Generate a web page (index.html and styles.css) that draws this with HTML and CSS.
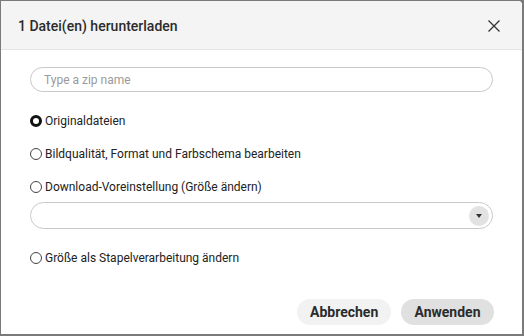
FILE: index.html
```html
<!DOCTYPE html>
<html lang="de">
<head>
    <meta charset="UTF-8">
    <title>Herunterladen</title>
    <link rel="stylesheet" href="styles.css">
</head>
<body>
    <div class="dialog">
        <div class="dialog-header">
            <h1 class="dialog-title">1 Datei(en) herunterladen</h1>
            <button class="close-btn" aria-label="Schließen">
                <svg width="12" height="12" viewBox="0 0 12 12">
                    <path d="M0.5 0.5 L11.5 11.5 M11.5 0.5 L0.5 11.5" stroke="#333" stroke-width="1.3" fill="none"/>
                </svg>
            </button>
        </div>

        <div class="dialog-body">
            <input type="text" class="zip-input" placeholder="Type a zip name">

            <label class="option option-first">
                <span class="radio checked"></span>
                Originaldateien
            </label>
            <label class="option">
                <span class="radio"></span>
                Bildqualität, Format und Farbschema bearbeiten
            </label>
            <label class="option">
                <span class="radio"></span>
                Download-Voreinstellung (Größe ändern)
            </label>
            <div class="select-box">
                <span class="select-arrow">
                    <svg width="6" height="4" viewBox="0 0 6 4"><path d="M0 0 L6 0 L3 4 Z" fill="#333"/></svg>
                </span>
            </div>
            <label class="option option-last">
                <span class="radio"></span>
                Größe als Stapelverarbeitung ändern
            </label>
        </div>

        <div class="dialog-footer">
            <button class="btn btn-cancel">Abbrechen</button>
            <button class="btn btn-apply">Anwenden</button>
        </div>
    </div>
</body>
</html>
```

FILE: styles.css
```css
* {
    margin: 0;
    padding: 0;
    box-sizing: border-box;
}

body {
    font-family: Roboto, 'Liberation Sans', sans-serif;
    background: #7a7a7a;
    width: 524px;
    height: 336px;
    overflow: hidden;
    padding: 1px 2px 2px 1px;
}

.dialog {
    background: #fff;
    width: 521px;
    height: 333px;
    border-radius: 0 4px 0 0;
    display: flex;
    flex-direction: column;
    overflow: hidden;
}

/* Header */
.dialog-header {
    background: #f4f4f4;
    border-bottom: 1px solid #e4e4e4;
    height: 49px;
    display: flex;
    align-items: center;
    justify-content: space-between;
    padding: 0 22px 0 17px;
}

.dialog-title {
    font-size: 14px;
    font-weight: 500;
    color: #2b2b2b;
    margin-top: 1px;
}

.close-btn {
    background: none;
    border: none;
    width: 12px;
    height: 12px;
    display: flex;
    margin-top: 1px;
}

/* Body */
.dialog-body {
    flex: 1;
    display: flex;
    flex-direction: column;
    padding: 17px 29px 0 29px;
}

.zip-input {
    width: 463px;
    height: 25px;
    border: 1px solid #c8c8c8;
    border-radius: 13px;
    padding: 0 13px;
    font-family: inherit;
    font-size: 12px;
    color: #333;
    outline: none;
    background: #fff;
}

.zip-input::placeholder {
    color: #9a9a9a;
}

.option {
    display: flex;
    align-items: center;
    gap: 3px;
    font-size: 12px;
    color: #222;
    height: 16px;
    margin-top: 17px;
}

.option-first {
    margin-top: 21px;
}

.option-last {
    margin-top: 21px;
}

.radio {
    width: 12px;
    height: 12px;
    border: 1px solid #444;
    border-radius: 50%;
    flex-shrink: 0;
    background: #fff;
}

.radio.checked {
    border: 3.5px solid #111;
}

.select-box {
    width: 463px;
    height: 27px;
    border: 1px solid #c8c8c8;
    border-radius: 14px;
    margin-top: 7px;
    display: flex;
    align-items: center;
    justify-content: flex-end;
    padding-right: 3px;
}

.select-arrow {
    width: 20px;
    height: 20px;
    border-radius: 50%;
    background: #e2e2e2;
    display: flex;
    align-items: center;
    justify-content: center;
}

/* Footer */
.dialog-footer {
    display: flex;
    justify-content: flex-end;
    gap: 10px;
    padding: 0 28px 9px 0;
}

.btn {
    height: 26px;
    border: none;
    border-radius: 13px;
    font-family: inherit;
    font-size: 14px;
    font-weight: 700;
    color: #2b2b2b;
    padding: 0 13px;
    cursor: pointer;
}

.btn-cancel {
    background: #f2f2f2;
    width: 94px;
}

.btn-apply {
    background: #e0e0e0;
    width: 93px;
}
```
